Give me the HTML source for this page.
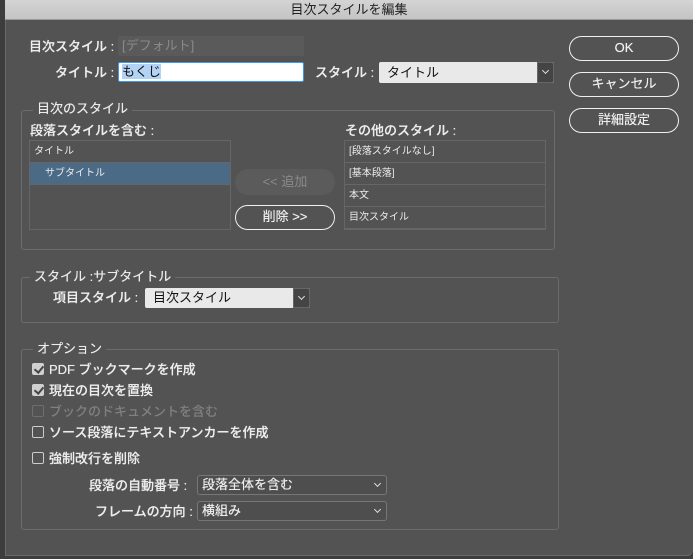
<!DOCTYPE html>
<html><head><meta charset="utf-8"><style>
*{margin:0;padding:0;box-sizing:border-box}
body{width:693px;height:559px;background:#3d3d3d;font-family:"Liberation Sans","Noto Sans CJK JP",sans-serif;color:#ececec;font-size:13px;position:relative;overflow:hidden}
.win{position:absolute;left:5px;top:0;width:688px;height:556px;background:#535353;border-left:1px solid #6a6a6a;border-bottom:1px solid #6a6a6a;border-radius:0 0 6px 0}
.tb{position:absolute;left:5px;top:0;width:688px;height:20px;background:linear-gradient(#d4d4d4,#c4c4c4);border-bottom:1px solid #9a9a9a;color:#222;text-align:center;font-size:13px;line-height:20px}
.a{position:absolute;white-space:nowrap}
.lbl{font-size:13px;line-height:16px;font-weight:500;text-shadow:0 0 0.4px #fff}
.btn{position:absolute;border:1.5px solid #f0f0f0;border-radius:13px;text-align:center;color:#f0f0f0;font-size:13px;text-shadow:0 0 0.4px #fff}
.grp{position:absolute;border:1px solid #6c6c6c;border-radius:3px}
.leg{position:absolute;background:#535353;padding:0 4px;font-size:13px;line-height:14px;text-shadow:0 0 0.4px #fff}
.sel{position:absolute;background:#e9e9e9;color:#111;font-size:13px;border-radius:2px}
.arr{position:absolute;right:0;top:0;bottom:0;width:17px;background:#444;border:1px solid #666;border-radius:0 2px 2px 0}
.arr::after,.dsel::after{content:"";position:absolute;width:4px;height:4px;border:solid #ddd;border-width:0 1px 1px 0;transform:rotate(45deg)}
.arr::after{left:5px;top:5px}
.row{position:absolute;left:0;right:0;height:22px;border-bottom:1px solid #666;font-size:10px;line-height:22px;padding-left:4px}
.cb{position:absolute;width:12px;height:12px;border:1px solid #ccc;border-radius:2px}
.cb.on{background:#d0d0d0;border-color:#d0d0d0}
.cb.on::after{content:"";position:absolute;left:3px;top:0px;width:4px;height:7px;border:solid #444;border-width:0 2px 2px 0;transform:rotate(40deg)}
.dsel{position:absolute;border:1px solid #777;border-radius:3px;background:#4e4e4e;font-size:13px;line-height:18px;padding-left:4px;color:#eee;text-shadow:0 0 0.4px #fff}
.dsel::after{right:6px;top:5px}
</style></head><body>
<div class="win"></div>
<div class="tb">目次スタイルを編集</div>

<div class="a lbl" style="left:29px;top:39px">目次スタイル :</div>
<div class="a" style="left:118px;top:36px;width:186px;height:20px;background:#5a5a5a;border-radius:2px;color:#8a8a8a;line-height:20px;padding-left:4px">[デフォルト]</div>
<div class="a lbl" style="left:55px;top:65px">タイトル :</div>
<div class="a" style="left:118px;top:62px;width:186px;height:20px;background:#fff;border:1.5px solid #3d9ae8;border-radius:2px;color:#111;line-height:17px;padding-left:3px"><span style="background:#b3d3f5">もくじ</span></div>
<div class="a lbl" style="left:315px;top:65px">スタイル :</div>
<div class="sel" style="left:379px;top:62px;width:175px;height:21px;line-height:21px;padding-left:8px">タイトル<div class="arr"></div></div>

<div class="btn" style="left:569px;top:36px;width:110px;height:25px;line-height:22px">OK</div>
<div class="btn" style="left:569px;top:72px;width:110px;height:25px;line-height:22px">キャンセル</div>
<div class="btn" style="left:569px;top:108px;width:110px;height:25px;line-height:22px">詳細設定</div>

<div class="grp" style="left:21px;top:110px;width:534px;height:140px"></div>
<div class="leg" style="left:33px;top:102px">目次のスタイル</div>
<div class="a lbl" style="left:30px;top:123px">段落スタイルを含む :</div>
<div class="a" style="left:29px;top:140px;width:202px;height:90px;border:1px solid #666">
 <div class="row" style="top:0">タイトル</div>
 <div class="row" style="top:22px;background:#4b6a85;padding-left:15px">サブタイトル</div>
</div>
<div class="a" style="left:235px;top:169px;width:100px;height:26px;border-radius:13px;background:#5b5b5b;color:#8a8a8a;text-align:center;line-height:26px">&lt;&lt; 追加</div>
<div class="btn" style="left:235px;top:205px;width:100px;height:25px;line-height:22px">削除 &gt;&gt;</div>
<div class="a lbl" style="left:345px;top:123px">その他のスタイル :</div>
<div class="a" style="left:344px;top:140px;width:202px;height:90px;border:1px solid #666">
 <div class="row" style="top:0">[段落スタイルなし]</div>
 <div class="row" style="top:22px">[基本段落]</div>
 <div class="row" style="top:44px">本文</div>
 <div class="row" style="top:66px">目次スタイル</div>
</div>

<div class="grp" style="left:21px;top:277px;width:538px;height:46px"></div>
<div class="leg" style="left:30px;top:270px">スタイル :サブタイトル</div>
<div class="a lbl" style="left:53px;top:290px">項目スタイル :</div>
<div class="sel" style="left:145px;top:288px;width:165px;height:20px;line-height:20px;padding-left:8px">目次スタイル<div class="arr"></div></div>

<div class="grp" style="left:21px;top:349px;width:538px;height:181px"></div>
<div class="leg" style="left:33px;top:342px">オプション</div>
<div class="cb on" style="left:32px;top:363px"></div><div class="a lbl" style="left:49px;top:362px">PDF ブックマークを作成</div>
<div class="cb on" style="left:32px;top:384px"></div><div class="a lbl" style="left:49px;top:383px">現在の目次を置換</div>
<div class="cb" style="left:32px;top:405px;border-color:#6e6e6e"></div><div class="a lbl" style="left:49px;top:404px;color:#808080;text-shadow:none">ブックのドキュメントを含む</div>
<div class="cb" style="left:32px;top:426px"></div><div class="a lbl" style="left:49px;top:425px">ソース段落にテキストアンカーを作成</div>
<div class="cb" style="left:32px;top:452px"></div><div class="a lbl" style="left:49px;top:451px">強制改行を削除</div>
<div class="a lbl" style="left:89px;top:478px">段落の自動番号 :</div>
<div class="dsel" style="left:197px;top:475px;width:190px;height:20px">段落全体を含む</div>
<div class="a lbl" style="left:95px;top:504px">フレームの方向 :</div>
<div class="dsel" style="left:197px;top:501px;width:190px;height:20px">横組み</div>
</body></html>
